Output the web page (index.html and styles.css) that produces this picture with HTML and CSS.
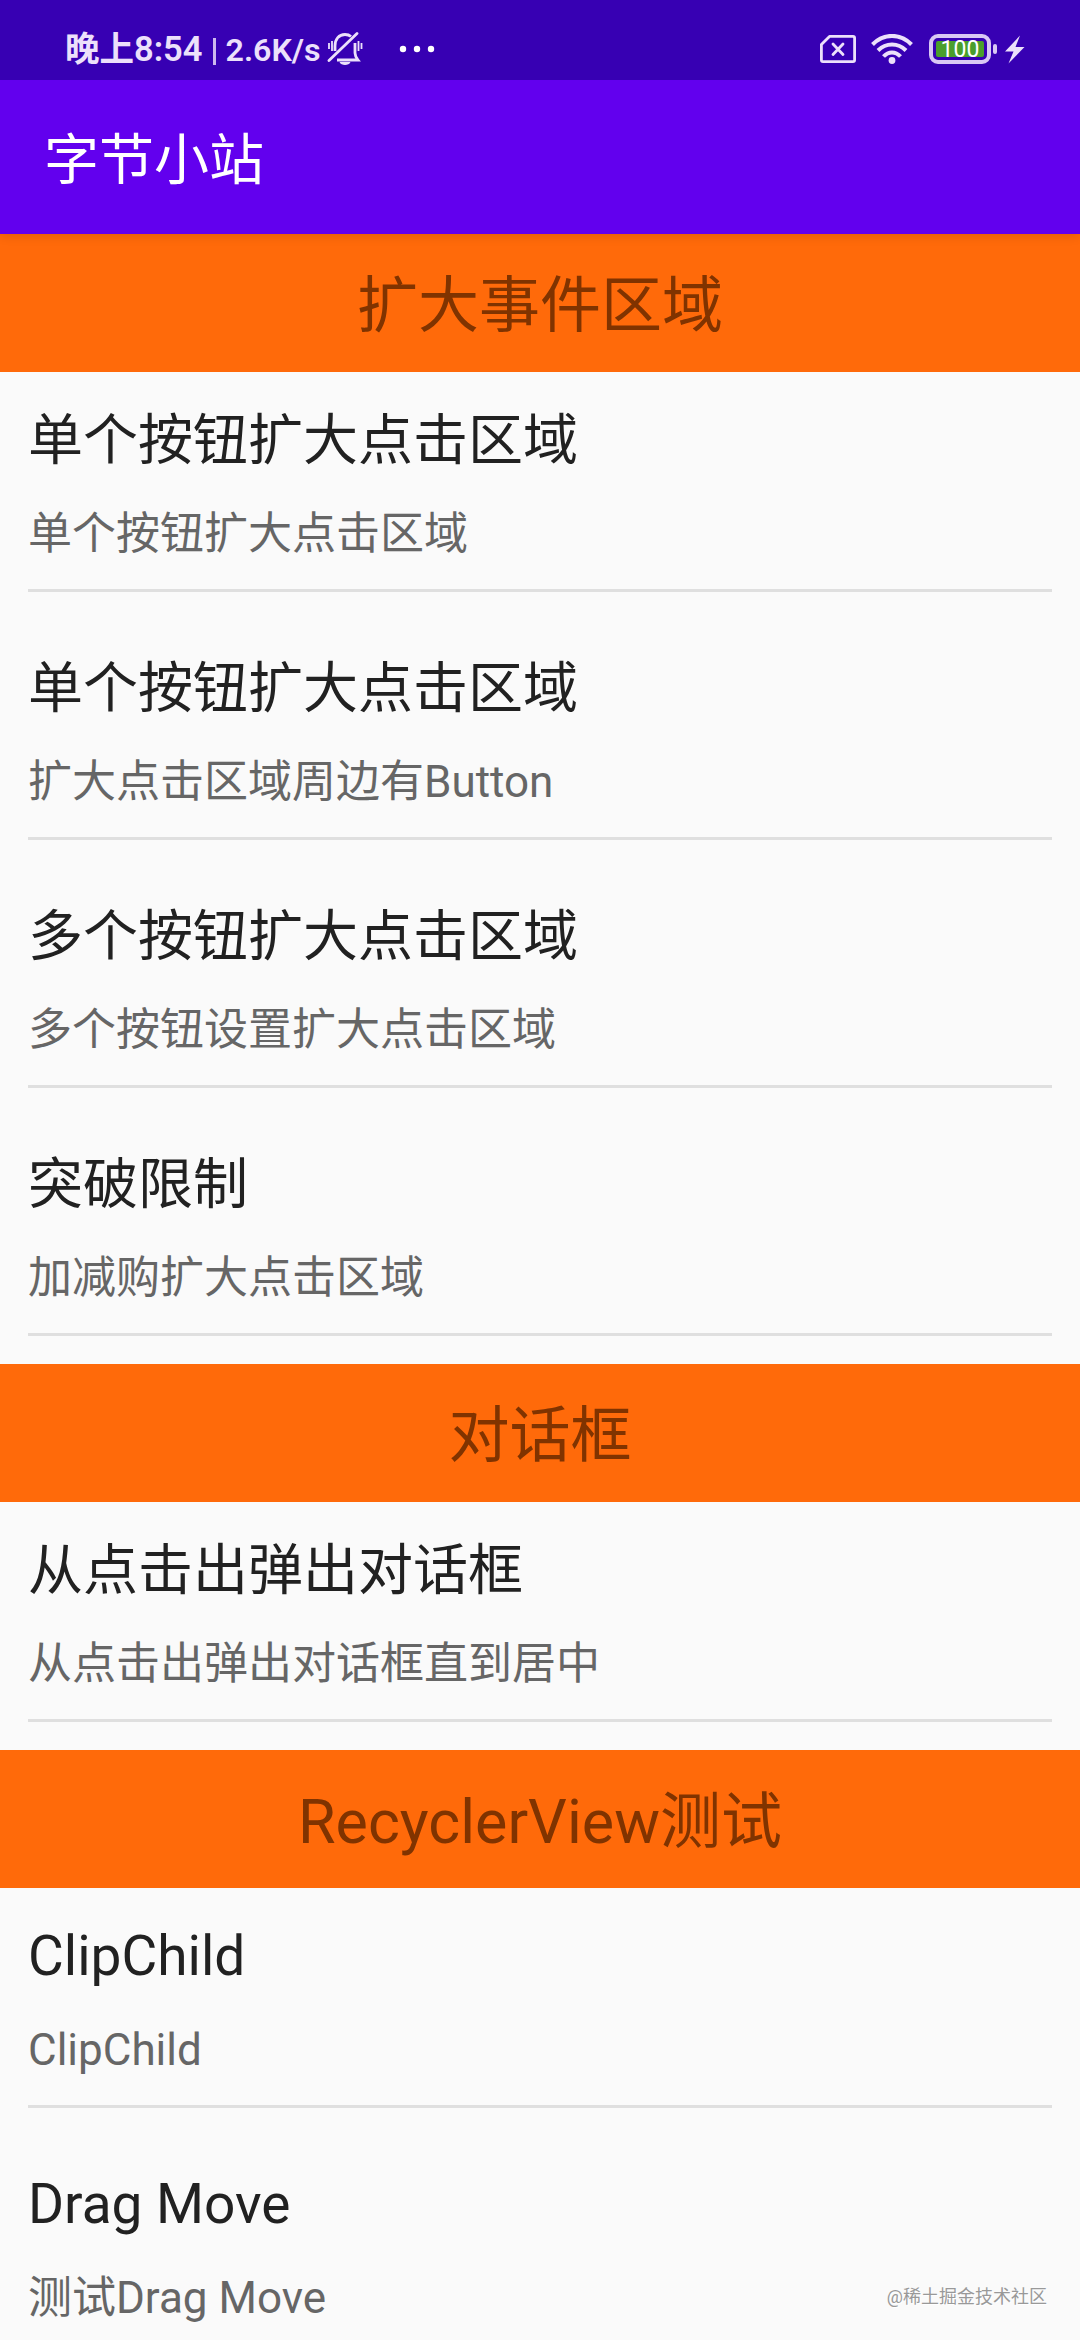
FILE: index.html
```html
<!DOCTYPE html>
<html lang="zh-CN">
<head>
  <meta charset="UTF-8">
  <meta name="viewport" content="width=device-width, initial-scale=1.0">
  <title>字节小站</title>
  <link rel="stylesheet" href="styles.css">
</head>
<body>
  <!-- Status bar -->
  <div class="status-bar">
    <div class="status-left">
      <span class="clock">晚上8:54</span>
      <span class="divider"></span>
      <span class="speed">2.6K/s</span>
      <svg class="icon-bell" width="36" height="34" viewBox="0 0 36 34" fill="none" stroke="#ece0fb" stroke-width="2.8">
        <path d="M8 19V14C8 7 12 2.5 18 2.5C20.5 2.5 22.5 3.2 24 4.5"/>
        <path d="M28 11V21C28 23.5 29 25.5 31 28H10"/>
        <path d="M2 28.5L30 1.5" stroke-linecap="round"/>
        <path d="M2 11V17M5 9V19M31.5 9V19M34.5 11V17" stroke-width="1.8"/>
        <path d="M12.5 30H23.5C22.5 32.2 20.5 33 18 33C15.5 33 13.5 32.2 12.5 30Z" fill="#ece0fb" stroke="none"/>
      </svg>
      <svg class="icon-dots" width="36" height="8" viewBox="0 0 36 8" fill="#fff">
        <circle cx="4" cy="4" r="3.2"/>
        <circle cx="18" cy="4" r="3.2"/>
        <circle cx="32" cy="4" r="3.2"/>
      </svg>
    </div>

    <div class="status-right">
      <svg width="36" height="28" viewBox="0 0 36 28" fill="none" stroke="#ece0fb" stroke-width="2.8">
        <path d="M9.5 1.4H33Q34.6 1.4 34.6 3V25Q34.6 26.6 33 26.6H3Q1.4 26.6 1.4 25V9.5Z" stroke-linejoin="round"/>
        <path d="M13 9L23 19.5M23 9L13 19.5" stroke-linecap="round"/>
      </svg>
      <svg class="icon-wifi" width="42" height="30" viewBox="0 0 42 30" fill="none" stroke="#ece0fb" stroke-width="4">
        <path d="M1.5 10.5C12.5 -1 29.5 -1 40.5 10.5"/>
        <path d="M7 16.5C15 8.5 27 8.5 35 16.5"/>
        <path d="M12.5 22.5C17.5 17 24.5 17 29.5 22.5"/>
        <circle cx="21" cy="26.5" r="3.4" fill="#ece0fb" stroke="none"/>
      </svg>
      <div class="battery">
        <div class="battery-level">100</div>
      </div>
      <div class="battery-cap"></div>
      <svg class="icon-bolt" width="20" height="29" viewBox="0 0 20 29" fill="#ece0fb">
        <path d="M15 0.5L0 16.5H8.5L3.5 28.5L19.5 12H10.5Z"/>
      </svg>
    </div>
  </div>

  <!-- App bar -->
  <header class="app-bar">字节小站</header>

  <!-- List -->
  <main class="list">
    <h2 class="section">扩大事件区域</h2>
    <div class="item">
      <p class="item-title">单个按钮扩大点击区域</p>
      <p class="item-desc">单个按钮扩大点击区域</p>
    </div>
    <div class="item">
      <p class="item-title">单个按钮扩大点击区域</p>
      <p class="item-desc">扩大点击区域周边有Button</p>
    </div>
    <div class="item">
      <p class="item-title">多个按钮扩大点击区域</p>
      <p class="item-desc">多个按钮设置扩大点击区域</p>
    </div>
    <div class="item">
      <p class="item-title">突破限制</p>
      <p class="item-desc">加减购扩大点击区域</p>
    </div>

    <h2 class="section">对话框</h2>
    <div class="item">
      <p class="item-title">从点击出弹出对话框</p>
      <p class="item-desc">从点击出弹出对话框直到居中</p>
    </div>

    <h2 class="section">RecyclerView测试</h2>
    <div class="item">
      <p class="item-title">ClipChild</p>
      <p class="item-desc">ClipChild</p>
    </div>
    <div class="item">
      <p class="item-title">Drag Move</p>
      <p class="item-desc">测试Drag Move</p>
    </div>
  </main>

  <div class="watermark">@稀土掘金技术社区</div>
</body>
</html>
```

FILE: styles.css
```css
* {
  box-sizing: border-box;
}

body {
  position: relative;
  margin: 0;
  height: 2340px;
  overflow: hidden;
  background: #fafafa;
  font-family: Roboto, "Noto Sans CJK SC", sans-serif;
}

/* Status bar */
.status-bar {
  display: flex;
  justify-content: space-between;
  height: 80px;
  padding: 18px 55px 0 65px;
  background: #3700b3;
  color: #ece0fb;
}

.status-left,
.status-right {
  display: flex;
  align-items: center;
  height: 62px;
}

.clock {
  font-size: 34.5px;
  font-weight: 600;
  line-height: 40px;
}

.divider {
  width: 3px;
  height: 27px;
  margin: 5px 10px 0 10px;
  background: #cdb8ee;
}

.speed {
  font-size: 32.2px;
  font-weight: 600;
  line-height: 40px;
  padding-top: 2px;
}

.icon-bell {
  margin-left: 6px;
}

.icon-dots {
  margin-left: 36px;
}

.icon-wifi {
  margin-left: 15px;
}

.battery {
  width: 62px;
  height: 30px;
  margin-left: 16px;
  padding: 3px;
  border: 4px solid #d9c8f4;
  border-radius: 9px;
}

.battery-level {
  height: 16px;
  border-radius: 2px;
  background: #4a9e2c;
  color: #fff;
  font-size: 23px;
  font-weight: 400;
  line-height: 18px;
  text-align: center;
}

.battery-cap {
  width: 4px;
  height: 10px;
  margin-left: 2px;
  border-radius: 2px;
  background: #d9c8f4;
}

.icon-bolt {
  margin-left: 8px;
}

/* App bar */
.app-bar {
  position: relative;
  height: 154px;
  padding: 6px 44px 0;
  background: #6200ee;
  box-shadow: 0 2px 10px rgba(0, 0, 0, 0.12);
  clip-path: inset(0 0 -14px 0);
  color: #fff;
  font-size: 55px;
  line-height: 148px;
}

/* Section header */
.section {
  height: 138px;
  margin: 0;
  padding-top: 6px;
  background: #ff6a0a;
  color: #803300;
  font-size: 61px;
  font-weight: 400;
  line-height: 132px;
  text-align: center;
}

/* List item */
.item {
  height: 220px;
  margin: 0 28px 28px;
  padding-top: 36px;
  border-bottom: 3px solid #dfdfdf;
}

.item-title {
  margin: 0 0 36px;
  color: #212121;
  font-size: 55px;
  line-height: 64px;
}

.item-desc {
  margin: 0;
  color: #666;
  font-size: 44px;
  line-height: 52px;
}

/* Watermark */
.watermark {
  position: absolute;
  right: 33px;
  bottom: 30px;
  color: #999;
  font-size: 18px;
  line-height: 26px;
  text-shadow: 1px 1px 0 #fff;
}
```
